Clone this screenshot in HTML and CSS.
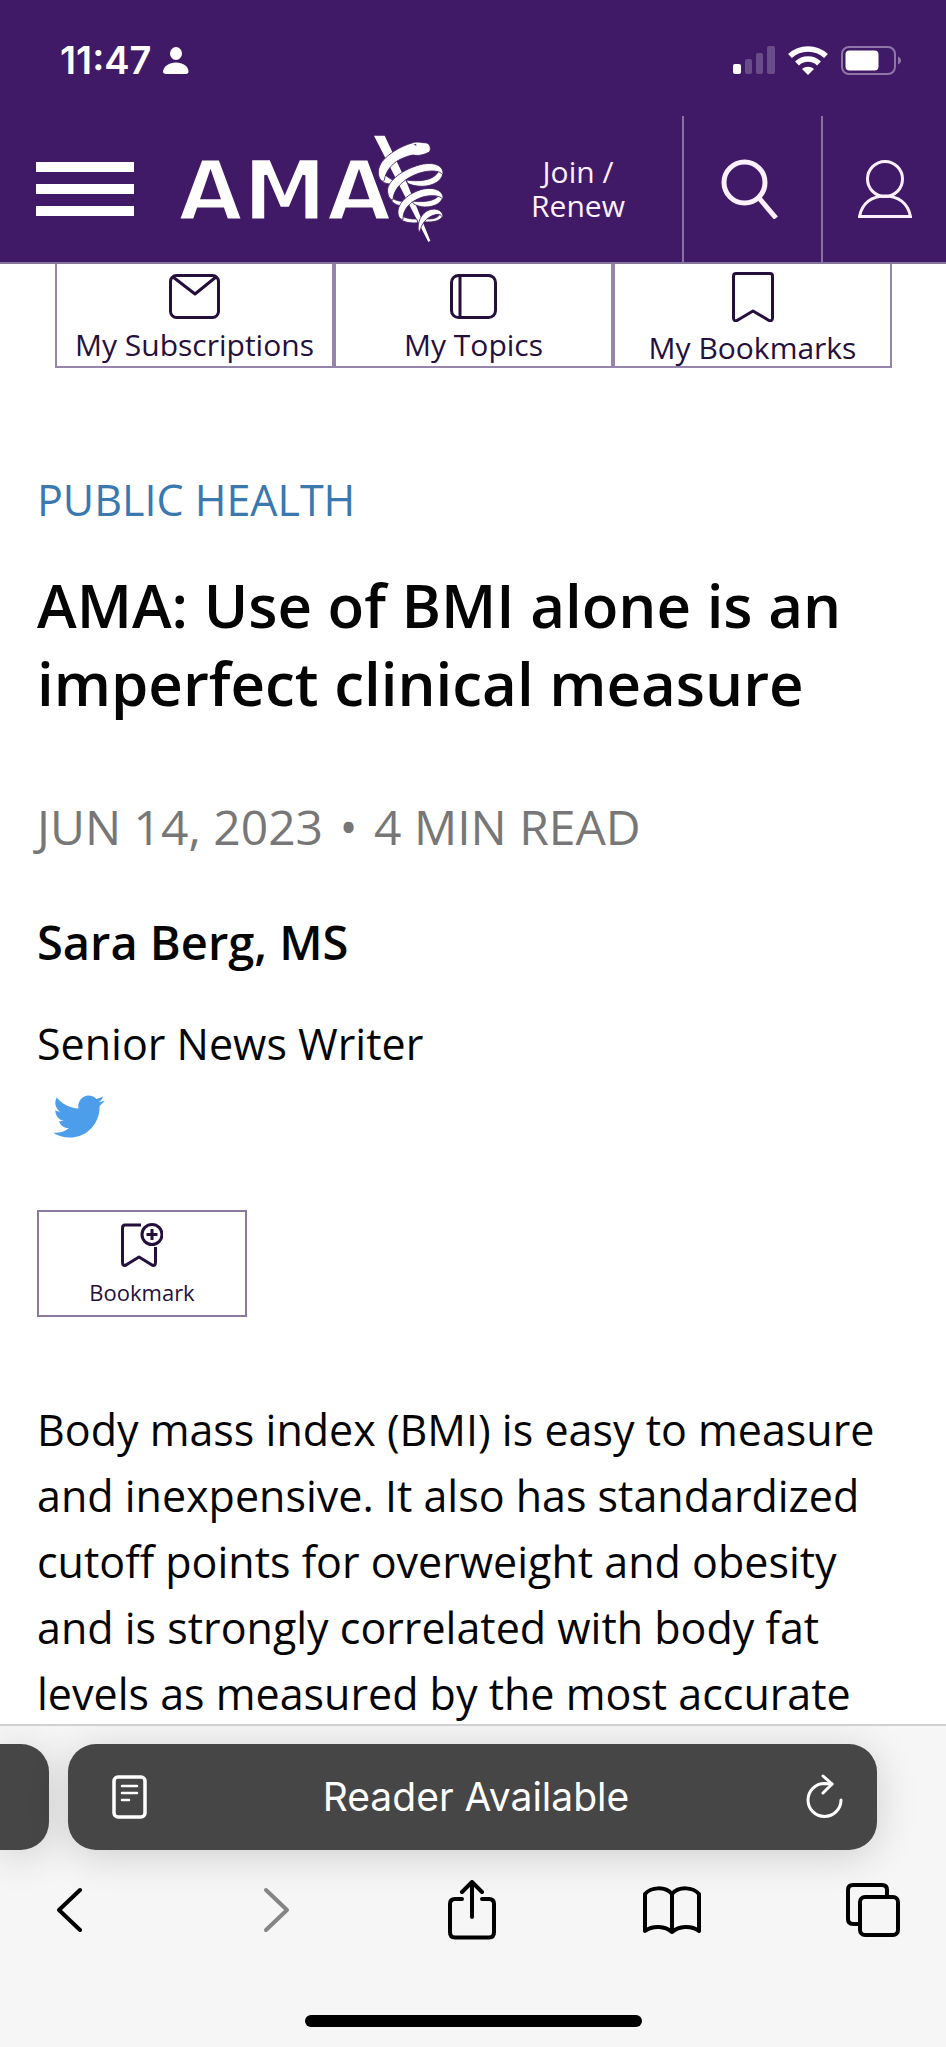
FILE: index.html
```html
<!DOCTYPE html>
<html lang="en">
<head>
<meta charset="utf-8">
<meta name="viewport" content="width=device-width, initial-scale=1">
<title>AMA: Use of BMI alone is an imperfect clinical measure</title>
<link rel="stylesheet" href="styles.css">
</head>
<body>
<div class="screen">
  <header class="top">
    <div class="status">
      <div class="status-side">
        <span class="clock">11:47</span>
        <svg width="26" height="27" viewBox="0 0 26 27" fill="#fff" aria-hidden="true"><ellipse cx="13" cy="6.500" rx="6" ry="6.500"/><path d="M3 27C1 27 0 26 0 24.500C1 19 6 15.500 13 15.500S25 19 25.500 24.500C25.500 26 24.500 27 23 27Z"/></svg>
      </div>
      <div class="status-side status-icons">
        <svg width="42" height="28" viewBox="0 0 42 28" fill="#fff" aria-hidden="true"><rect x="0" y="18" width="8" height="10" rx="2"/><g opacity=".22"><rect x="12" y="13" width="7" height="15" rx="2"/><rect x="23" y="7" width="7" height="21" rx="2"/><rect x="34" y="0" width="8" height="28" rx="2"/></g></svg>
        <svg width="40" height="29" viewBox="0 0 40 29" fill="none" stroke="#fff" stroke-width="5.500" aria-hidden="true"><path d="M2 10C12 .500 28 .500 38 10"/><path d="M9 17.500C15 11.500 25 11.500 31 17.500"/><path d="M20 29L14 23C17.500 20 22.500 20 26 23Z" fill="#fff" stroke="none"/></svg>
        <svg width="61" height="29" viewBox="0 0 61 29" aria-hidden="true"><rect x="1" y="1" width="53" height="27" rx="7" fill="none" stroke="#8f76a6" stroke-width="2"/><rect x="4.500" y="4.500" width="33" height="20" rx="4" fill="#fff"/><path d="M57 10.500C61 12 61 17 57 18.500Z" fill="#8f76a6"/></svg>
      </div>
    </div>
    <div class="nav">
      <button class="menu" type="button" aria-label="Menu"><span></span><span></span><span></span></button>
      <a class="logo" href="#" aria-label="AMA home">
        <svg width="268" height="114" viewBox="0 0 268 114" aria-hidden="true">
          <text class="logo-text" x="-2" y="88">AMA</text>
          <g transform="translate(180 -12) scale(.3333)" fill="#fff">
            <path d="M42 47H74L141 190L211 362L205 366Z"/>
            <g stroke="#401a66" stroke-width="2.500">
              <path d="M57 165C60 182 70 192 95 192L99 180C90 176 84 172 77 166Z"/>
              <path d="M90 225C98 238 112 244 130 244L120 257C104 253 96 248 93 236Z"/>
              <path d="M118 283C130 293 150 298 170 297L174 308C150 311 130 306 122 298Z"/>
              <path d="M248 150C253 178 225 198 185 199C170 199 155 196 143 190L139 180C175 186 225 182 236 152Z"/>
              <path d="M248 223C252 246 225 262 193 261C180 260 170 257 160 251L157 243C190 248 228 243 238 224Z"/>
              <path d="M248 283C250 298 225 310 190 305L194 295C215 300 234 294 240 282Z"/>
              <path d="M211 86C211 74 205 68 190 68C180 66 165 65 156 69C120 79 85 102 67 124C53 143 52 163 60 177C66 186 72 184 73 180C78 150 100 125 130 114C145 108 158 103 165 106C178 108 195 103 206 97C210 94 211 90 211 86Z"/>
              <path d="M249 165C252 138 227 126 190 132C140 142 90 175 83 206C81 224 89 240 99 240C100 207 130 176 176 160C210 149 240 151 249 165Z"/>
              <path d="M249 238C252 214 228 200 190 207C145 218 112 250 114 279C115 292 121 298 129 299C128 268 150 243 188 231C215 224 240 226 249 238Z"/>
              <path d="M249 295C251 273 231 262 207 270C183 280 170 308 176 336C180 336 182 326 184 320C194 297 215 284 235 283C242 284 247 288 249 295Z"/>
            </g>
            <path d="M160 74L168 72L170 77Z" fill="#401a66"/>
          </g>
        </svg>
      </a>
      <a class="join" href="#">Join /<br>Renew</a>
      <button class="nav-cell nav-search" type="button" aria-label="Search">
        <svg width="58" height="60" viewBox="0 0 58 60" fill="none" stroke="#fcf0ff" aria-hidden="true"><circle cx="23.500" cy="23.500" r="20.500" stroke-width="5"/><path d="M38 39L55 59" stroke-width="5"/></svg>
      </button>
      <button class="nav-cell nav-user" type="button" aria-label="Account">
        <svg width="54" height="58" viewBox="0 0 54 58" fill="none" stroke="#fcf0ff" stroke-width="3" aria-hidden="true"><circle cx="27" cy="19" r="17.500"/><path d="M1.500 56.500C4 43 14 36 27 36S50 43 52.500 56.500Z"/></svg>
      </button>
    </div>
  </header>

  <nav class="tabs">
    <a class="tab" href="#"><svg width="51" height="45" viewBox="0 0 51 45" aria-hidden="true"><rect x="1.500" y="1.500" width="48" height="42" rx="6"/><path d="M4 3L26 20L47 3"/></svg>My Subscriptions</a>
    <a class="tab" href="#"><svg width="47" height="45" viewBox="0 0 47 45" aria-hidden="true"><rect x="1.500" y="1.500" width="44" height="42" rx="7"/><path d="M10 1V44"/></svg>My Topics</a>
    <a class="tab tab-marks" href="#"><svg width="42" height="50" viewBox="0 0 42 50" aria-hidden="true"><path d="M4 1.500H38Q40.500 1.500 40.500 4V46Q40.500 49.500 37 48.500L21 39L5 48.500Q1.500 49.500 1.500 46V4Q1.500 1.500 4 1.500Z"/></svg>My Bookmarks</a>
  </nav>

  <main class="article">
    <a class="category" href="#">PUBLIC HEALTH</a>
    <h1 class="title">AMA: Use of BMI alone is an imperfect clinical measure</h1>
    <p class="meta">JUN 14, 2023 <span class="dot">•</span> 4 MIN READ</p>
    <p class="author">Sara Berg, MS</p>
    <p class="role">Senior News Writer</p>
    <a class="twitter" href="#" aria-label="Twitter"><svg width="52" height="43" viewBox="0 2 24 20" fill="#4c9eeb" aria-hidden="true"><path d="M23.953 4.570a10 10 0 01-2.825.775 4.958 4.958 0 002.163-2.723c-.951.555-2.005.959-3.127 1.184a4.920 4.920 0 00-8.384 4.482C7.690 8.095 4.067 6.130 1.640 3.162a4.822 4.822 0 00-.666 2.475c0 1.710.870 3.213 2.188 4.096a4.904 4.904 0 01-2.228-.616v.060a4.923 4.923 0 003.946 4.827 4.996 4.996 0 01-2.212.085 4.936 4.936 0 004.604 3.417 9.867 9.867 0 01-6.102 2.105c-.390 0-.779-.023-1.170-.067a13.995 13.995 0 007.557 2.209c9.053 0 13.998-7.496 13.998-13.985 0-.210 0-.420-.015-.630A9.935 9.935 0 0024 4.590z"/></svg></a>
    <button class="bookmark" type="button"><svg width="42" height="44" viewBox="0 0 42 44" aria-hidden="true"><path d="M20 2H4Q1.500 2 1.500 5V39Q1.500 43.500 5 42L18 34L31 42Q34.500 43.500 34.500 39V24"/><circle cx="31" cy="11.500" r="10"/><path d="M31 6V17M25.500 11.500H36.500"/></svg>Bookmark</button>
    <p class="body">Body mass index (BMI) is easy to measure and inexpensive. It also has standardized cutoff points for overweight and obesity and is strongly correlated with body fat levels as measured by the most accurate</p>
  </main>

  <footer class="browser">
    <div class="tabstrip">
      <div class="pill-prev"></div>
      <div class="pill">
        <button type="button" aria-label="Reader view"><svg width="35" height="44" viewBox="0 0 35 44" fill="none" stroke="#fff" stroke-linecap="round" aria-hidden="true"><rect x="2" y="2" width="31" height="40" rx="4" stroke-width="3.500"/><path d="M10 11H25M10 18H25M10 25H17" stroke-width="2.500"/></svg></button>
        <span>Reader Available</span>
        <button type="button" aria-label="Reload"><svg width="38" height="46" viewBox="0 0 38 46" fill="none" stroke="#fff" stroke-width="3" stroke-linecap="round" stroke-linejoin="round" aria-hidden="true"><path d="M36 26A16.500 16.500 0 1 1 19.500 9.500L27 10"/><path d="M18 2L27 10L18 19"/></svg></button>
      </div>
    </div>
    <div class="tools">
      <button type="button" aria-label="Back"><svg width="26" height="46" viewBox="0 0 26 46" aria-hidden="true"><path d="M23 3L2 23L23 43"/></svg></button>
      <button type="button" aria-label="Forward" class="off"><svg width="38" height="46" viewBox="-12 0 38 46" aria-hidden="true"><path d="M2 3L23 23L2 43"/></svg></button>
      <button type="button" aria-label="Share"><svg width="48" height="60" viewBox="0 0 48 60" aria-hidden="true"><path d="M14 19H7Q2 19 2 24V52Q2 57.500 7 57.500H41Q46 57.500 46 52V24Q46 19 41 19H34M24 37V3M14 12L24 2L34 12"/></svg></button>
      <button type="button" aria-label="Bookmarks"><svg width="58" height="48" viewBox="0 0 58 48" aria-hidden="true"><path d="M29 8C22 0 8 1 2 8V45C10 39 22 40 29 46C36 40 48 39 56 45V8C50 1 36 0 29 8ZM29 8V46"/></svg></button>
      <button type="button" aria-label="Tabs"><svg width="54" height="54" viewBox="0 0 54 54" aria-hidden="true"><path d="M14 41H7Q2 41 2 36V7Q2 2 7 2H36Q41 2 41 7V14"/><rect x="14" y="14" width="38" height="38" rx="5"/></svg></button>
    </div>
    <div class="home"></div>
  </footer>
</div>
</body>
</html>
```
FILE: styles.css
```css
* { box-sizing: border-box; }
body { margin: 0; background: #fff; color: #050505; font-family: "Open Sans", "Noto Sans", sans-serif; }
button { margin: 0; padding: 0; border: 0; background: none; color: inherit; font: inherit; }
a { color: inherit; text-decoration: none; }
svg { display: block; flex: none; }
h1, p { margin: 0; }

.screen { display: flex; flex-direction: column; min-height: 100vh; }

.top { background: #401a66; color: #fff; border-bottom: 2px solid #85759a; }
.status { display: flex; justify-content: space-between; align-items: center; padding: 40px 44px 36px 60px; }
.status-side { display: flex; align-items: center; gap: 12px; height: 40px; }
.status-icons { gap: 13px; }
.clock { font: 600 38px/40px Inter, sans-serif; }

.nav { display: flex; align-items: center; height: 146px; padding-left: 36px; }
.menu { display: flex; flex-direction: column; gap: 12px; width: 98px; }
.menu span { height: 10px; background: #fff; }
.logo { margin-left: 46px; }
.logo-text { font: 700 84px "DejaVu Sans", sans-serif; fill: #fff; stroke: #401a66; stroke-width: 3; }
.join { flex: 1; padding-left: 26px; color: #fcf0ff; font-size: 30px; line-height: 34px; text-align: center; }
.nav-cell { display: flex; align-items: center; justify-content: center; align-self: stretch; border-left: 2px solid #8a72a0; }
.nav-search { width: 139px; padding-right: 6px; }
.nav-user { width: 125px; }

.tabs { display: flex; margin: 0 54px 0 55px; }
.tab { flex: 1; display: flex; flex-direction: column; align-items: center; gap: 8px; height: 104px; padding-top: 10px; border: 2px solid #9585ad; border-top: 0; color: #25103d; font-size: 30px; line-height: 36px; white-space: nowrap; }
.tab svg, .bookmark svg { fill: none; stroke: #25103d; stroke-width: 3; stroke-linejoin: round; }
.tab-marks { padding-top: 8px; }

.article { flex: 1; display: flex; flex-direction: column; align-items: flex-start; padding: 104px 64px 0 37px; }
.category { color: #3a78b0; font-size: 43px; line-height: 56px; }
.title { margin-top: 38px; font-size: 60px; font-weight: 600; line-height: 78px; }
.meta { margin-top: 75px; color: #777; font-size: 48px; line-height: 60px; }
.dot { margin: 0 4px; }
.author { margin-top: 55px; font-size: 47px; font-weight: 600; line-height: 60px; }
.role { margin-top: 42px; font-size: 43px; line-height: 60px; }
.twitter { margin: 21px 0 0 16px; }
.bookmark { display: flex; flex-direction: column; align-items: center; gap: 9px; width: 210px; height: 107px; margin-top: 72px; padding-top: 11px; border: 2px solid #8b7a9f; color: #25103d; font-size: 22px; line-height: 32px; }
.body { margin: 80px 0 -8px; font-size: 43px; line-height: 66px; }

.browser { overflow: hidden; background: #f6f6f6; border-top: 2px solid #d0d0d0; }
.tabstrip { display: flex; gap: 19px; padding: 18px 69px 0 0; }
.pill-prev, .pill { height: 106px; background: #464646; box-shadow: 0 6px 40px rgba(0, 0, 0, .16); }
.pill-prev { width: 49px; border-radius: 0 28px 28px 0; }
.pill { flex: 1; display: flex; align-items: center; justify-content: space-between; padding: 0 34px 0 44px; border-radius: 28px; color: #fff; font: 39px/48px Inter, sans-serif; }
.tools { display: flex; align-items: center; justify-content: space-between; height: 60px; margin-top: 30px; padding: 0 43px 0 40px; }
.tools button { display: flex; justify-content: center; width: 60px; }
.tools svg { fill: none; stroke: #000; stroke-width: 4; stroke-linecap: round; stroke-linejoin: round; }
.tools .off svg { stroke: #858585; }
.home { width: 337px; height: 12px; margin: 75px auto 20px; border-radius: 6px; background: #000; }
```
